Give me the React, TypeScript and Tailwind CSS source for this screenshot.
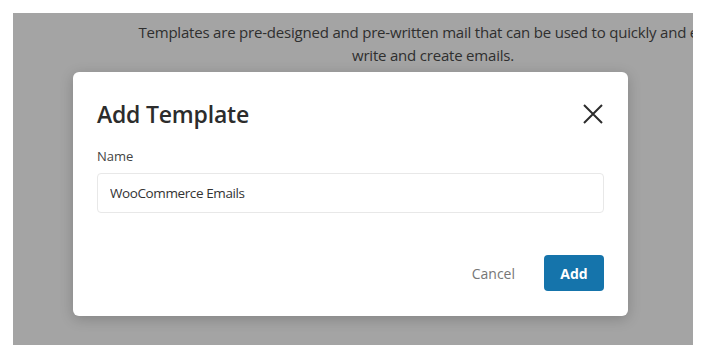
import React, { useState } from 'react';

const App: React.FC = () => {
  const [name, setName] = useState('WooCommerce Emails');

  return (
    <div className="w-[707px] h-[354px] bg-white pt-[13px] pl-[13px] pr-[14px] pb-[9px] font-['Open_Sans',sans-serif]">
      {/* Dimmed page behind the modal */}
      <div className="h-full bg-[#a4a4a4] overflow-hidden flex flex-col">
        <p className="ml-[120px] w-[600px] shrink-0 mt-[8px] text-center text-[15px] leading-[23px] text-[#2f2f2f] tracking-[-0.2px]">
          Templates are pre-designed and pre-written mail that can be used to quickly and easily write and create emails.
        </p>

        {/* Modal */}
        <div className="ml-[60px] mt-[5px] w-[555px] h-[244px] shrink-0 bg-white rounded-[6px] shadow-[0_3px_14px_rgba(0,0,0,0.2)] pt-[26px] px-[24px] pb-[25px] flex flex-col">
          <div className="flex items-center justify-between">
            <h2 className="text-[23px] leading-[32px] font-semibold text-[#2c2c2c] tracking-[-0.2px]">Add Template</h2>
            <button className="mr-[1px] text-[#2c2c2c]">
              <svg width="20" height="20" viewBox="0 0 20 20" fill="none" stroke="currentColor" strokeWidth="2">
                <path d="M1 1l18 18M19 1L1 19" />
              </svg>
            </button>
          </div>

          <label className="mt-[16px] text-[13px] leading-[20px] text-[#444]">Name</label>
          <div className="relative mt-[7px]">
            <input
              type="text"
              value={name}
              onChange={(e) => setName(e.target.value)}
              className="h-[40px] w-full border border-[#e8e8e8] rounded-[4px] px-[12px] text-[13.5px] text-[#333] tracking-[-0.4px] focus:outline-none"
            />
          </div>

          <div className="mt-auto flex items-center justify-end gap-[29px]">
            <button className="text-[14px] text-[#767676]">Cancel</button>
            <button className="w-[60px] h-[36px] rounded-[4px] bg-[#1574ab] text-white text-[14px] font-bold">Add</button>
          </div>
        </div>
      </div>
    </div>
  );
};

export default App;
